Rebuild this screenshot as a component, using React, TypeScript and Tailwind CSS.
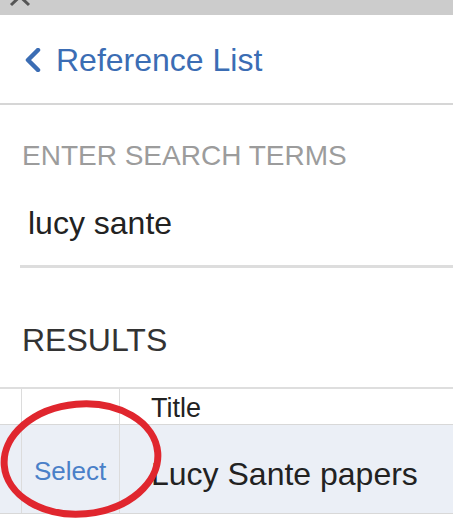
import React from 'react';

export default function App() {
  const results = [{ id: 1, title: 'Lucy Sante papers' }];

  return (
    <div className="w-[453px] h-[527px] overflow-hidden bg-white font-['Liberation_Sans',Arial,sans-serif]">
      {/* Top bar with close icon */}
      <div className="relative h-[15px] bg-[#cccccc]">
        <svg className="absolute left-[6px] top-[-12px]" width="28" height="20" viewBox="0 0 28 20">
          <path d="M5 0 L23 17 M23 0 L5 17" stroke="#555" strokeWidth="3" fill="none" />
        </svg>
      </div>

      {/* Header */}
      <div className="pt-[25px] pb-[23px] border-b-2 border-[#d6d6d6] px-[24px]">
        <button className="flex items-center gap-[14px] text-[#3b6db4] text-[32px] leading-[40px]">
          <svg width="18" height="24" viewBox="0 0 18 24" className="shrink-0">
            <path d="M14 2 L4 12 L14 22" stroke="#3b6db4" strokeWidth="4.5" fill="none" strokeLinecap="round" strokeLinejoin="round" />
          </svg>
          <span>Reference List</span>
        </button>
      </div>

      {/* Search */}
      <div className="pt-[35px] pl-[20px]">
        <label className="block pl-[2px] text-[28px] leading-[32px] text-[#9c9c9c]">ENTER SEARCH TERMS</label>
        <div className="mt-[31px] pl-[8px] pb-[22px] border-b-[3px] border-[#dddddd] text-[32px] leading-[40px] text-[#222]">
          lucy sante
        </div>
      </div>

      {/* Results */}
      <div className="pt-[52px] pl-[22px] text-[32px] leading-[40px] text-[#333]">RESULTS</div>

      <div className="relative mt-[27px]">
        <div className="border-t-2 border-[#dedede]">
          <div className="flex h-[36px] border-b border-[#d8d8d8]">
            <div className="w-[22px] border-r border-[#dcdcdc]" />
            <div className="w-[98px] border-r border-[#dcdcdc]" />
            <div className="flex-1 pl-[31px] pt-[6px] text-[27px] leading-[27px] text-[#222]">Title</div>
          </div>
          {results.map((r) => (
            <div key={r.id} className="flex h-[89px] bg-[#ebeff6] border-b border-[#d8d8d8]">
              <div className="w-[22px] border-r border-[#dcdcdc]" />
              <div className="w-[98px] border-r border-[#dcdcdc] flex items-center pt-[4px] pl-[12px] text-[26px] leading-[32px] text-[#4a80c8]">
                Select
              </div>
              <div className="flex-1 flex items-center pt-[9px] pl-[31px] text-[32px] leading-[40px] text-[#222]">
                {r.title}
              </div>
            </div>
          ))}
        </div>

        {/* Red annotation circle */}
        <svg className="absolute left-0 top-0 pointer-events-none" width="175" height="139" viewBox="0 0 175 139">
          <ellipse cx="81" cy="72" rx="77" ry="55" transform="rotate(-5 81 72)" stroke="#e0262e" strokeWidth="7" fill="none" />
        </svg>
      </div>
    </div>
  );
}
